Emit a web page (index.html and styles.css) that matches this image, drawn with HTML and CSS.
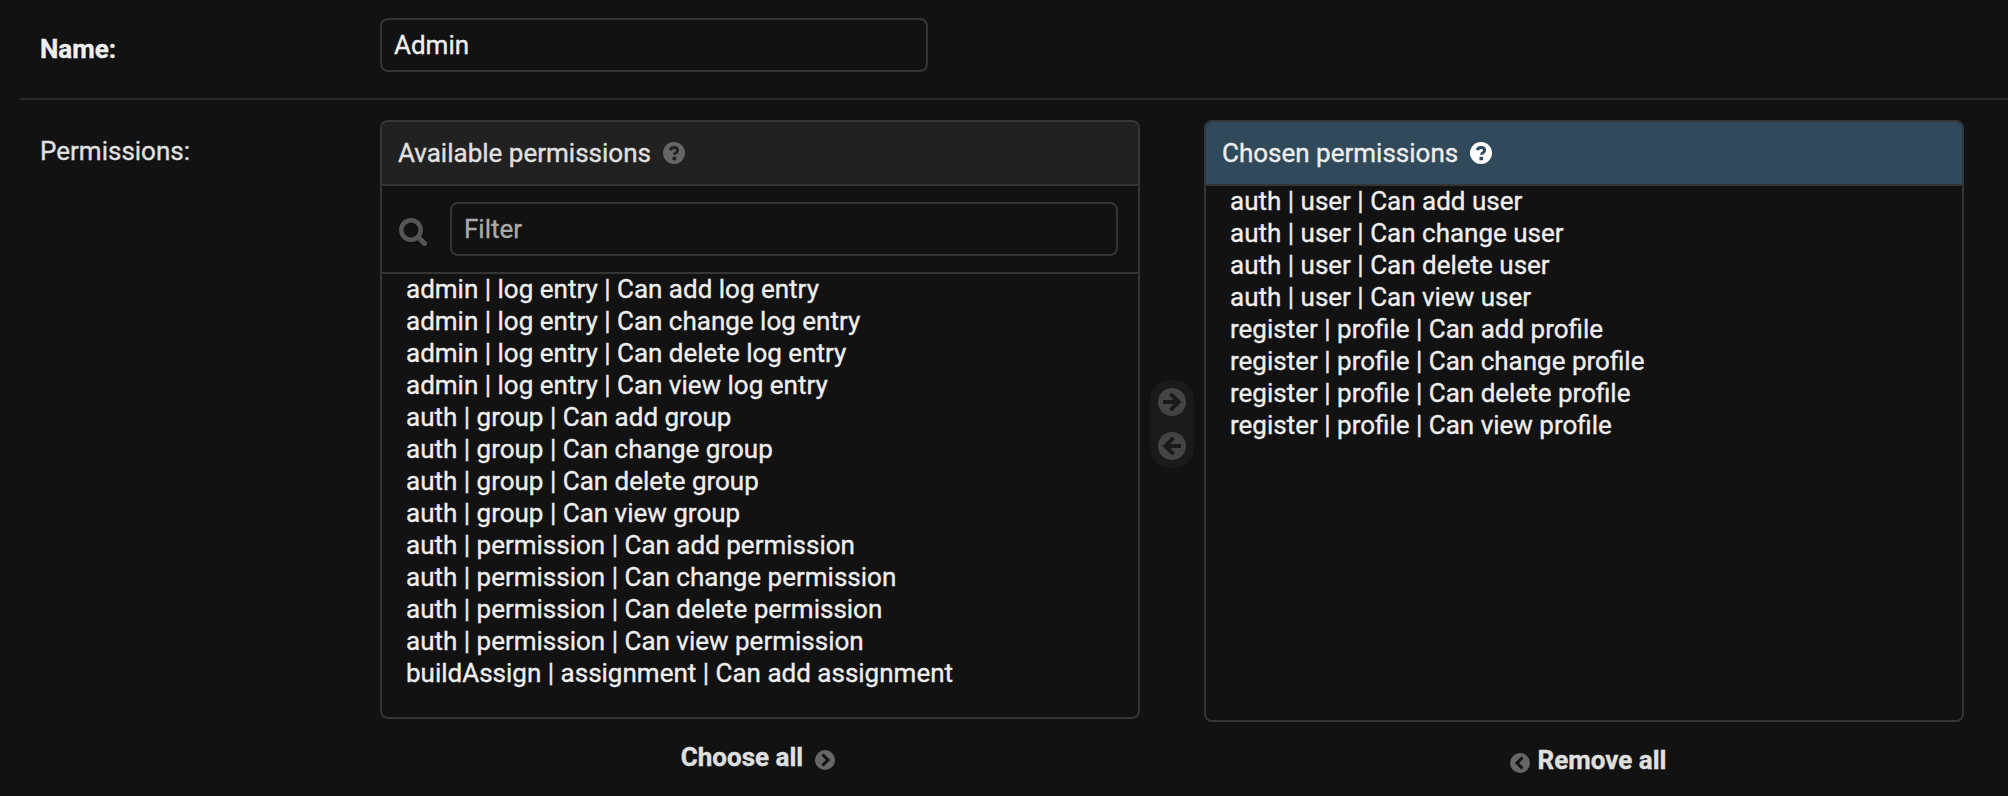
FILE: index.html
```
<!DOCTYPE html>
<html lang="en">
<head>
<meta charset="utf-8">
<title>Group permissions</title>
<link rel="stylesheet" href="styles.css">
</head>
<body>
<form class="module">
  <div class="row row-name">
    <label class="label required" for="name">Name:</label>
    <input class="field name-field" id="name" type="text" value="Admin">
  </div>
  <div class="row row-permissions">
    <div class="label">Permissions:</div>
    <div class="selector">
      <div class="column">
        <section class="panel available">
          <h2 class="panel-title">Available permissions
            <svg class="help" viewBox="0 0 22 22"><circle cx="11" cy="11" r="11" fill="#666"/><path d="M7.2 8.100C7.900 6.300 9.300 5.600 11 5.600c2.100 0 3.600 1.200 3.600 2.900 0 2.300-3.100 2.100-3.100 4.300" fill="none" stroke="#212121" stroke-width="3"/><path d="M9.500 14.800h3.600v3.400H9.500z" fill="#212121"/></svg>
          </h2>
          <div class="filter">
            <svg class="search" viewBox="0 0 28 28"><circle cx="12" cy="12" r="9.700" fill="none" stroke="#555" stroke-width="4.500"/><path d="M19 19l6.500 6.500" stroke="#555" stroke-width="5" stroke-linecap="round"/></svg>
            <input class="field filter-field" type="text" placeholder="Filter">
          </div>
          <ul class="options">
            <li>admin | log entry | Can add log entry</li>
            <li>admin | log entry | Can change log entry</li>
            <li>admin | log entry | Can delete log entry</li>
            <li>admin | log entry | Can view log entry</li>
            <li>auth | group | Can add group</li>
            <li>auth | group | Can change group</li>
            <li>auth | group | Can delete group</li>
            <li>auth | group | Can view group</li>
            <li>auth | permission | Can add permission</li>
            <li>auth | permission | Can change permission</li>
            <li>auth | permission | Can delete permission</li>
            <li>auth | permission | Can view permission</li>
            <li>buildAssign | assignment | Can add assignment</li>
          </ul>
        </section>
        <a class="all choose-all">Choose all
          <svg class="chevron" viewBox="0 0 20 20"><circle cx="10" cy="10" r="10" fill="#666"/><path d="M7.500 4.500l5.500 5.500-5.500 5.500" fill="none" stroke="#121212" stroke-width="3"/></svg>
        </a>
      </div>
      <div class="chooser">
        <svg class="arrow" viewBox="0 0 28 28"><circle cx="14" cy="14" r="14" fill="#444"/><path d="M5 14h15M12.500 5.800l8.200 8.200-8.200 8.200" fill="none" stroke="#1a1a1a" stroke-width="4"/></svg>
        <svg class="arrow" viewBox="0 0 28 28"><circle cx="14" cy="14" r="14" fill="#444"/><path d="M23 14H8M15.500 5.800L7.300 14l8.200 8.200" fill="none" stroke="#1a1a1a" stroke-width="4"/></svg>
      </div>
      <div class="column">
        <section class="panel chosen">
          <h2 class="panel-title">Chosen permissions
            <svg class="help" viewBox="0 0 22 22"><circle cx="11" cy="11" r="11" fill="#fff"/><path d="M7.200 8.100C7.900 6.300 9.300 5.600 11 5.600c2.100 0 3.600 1.200 3.600 2.900 0 2.300-3.100 2.100-3.100 4.300" fill="none" stroke="#304a5b" stroke-width="3"/><path d="M9.500 14.800h3.600v3.400H9.500z" fill="#304a5b"/></svg>
          </h2>
          <ul class="options">
            <li>auth | user | Can add user</li>
            <li>auth | user | Can change user</li>
            <li>auth | user | Can delete user</li>
            <li>auth | user | Can view user</li>
            <li>register | profile | Can add profile</li>
            <li>register | profile | Can change profile</li>
            <li>register | profile | Can delete profile</li>
            <li>register | profile | Can view profile</li>
          </ul>
        </section>
        <a class="all remove-all">
          <svg class="chevron" viewBox="0 0 20 20"><circle cx="10" cy="10" r="10" fill="#666"/><path d="M12.500 4.500L7 10l5.500 5.500" fill="none" stroke="#121212" stroke-width="3"/></svg>
          Remove all</a>
      </div>
    </div>
  </div>
</form>
</body>
</html>
```
FILE: styles.css
```
* { box-sizing: border-box; }
body {
  margin: 0;
  height: 796px;
  overflow: hidden;
  background: #121212;
  color: #e0e0e0;
  font: 26px/32px Roboto, sans-serif;
  -webkit-text-stroke: 0.35px currentColor;
}
.module { margin: 0 0 0 20px; }
.row { display: flex; padding-left: 20px; }
.row-name { height: 100px; padding-top: 18px; border-bottom: 2px solid #282828; }
.row-permissions { padding-top: 20px; }
.label { width: 340px; flex: none; padding-top: 15px; }
.required { font-weight: 700; color: #eee; }
.field {
  display: block;
  height: 54px;
  padding: 0 12px;
  border: 2px solid #353535;
  border-radius: 8px;
  background: #121212;
  color: #eee;
  font: inherit;
}
.name-field { width: 548px; }
.field::placeholder { color: #aaa; opacity: 1; }
.selector { display: flex; }
.column { width: 760px; }
.panel { border: 2px solid #353535; border-radius: 8px; overflow: hidden; }
.available { height: 599px; }
.chosen { height: 602px; }
.panel-title {
  display: flex;
  align-items: center;
  gap: 12px;
  height: 64px;
  margin: 0;
  padding: 0 16px;
  border-bottom: 2px solid #353535;
  background: #212121;
  font-size: 26px;
  font-weight: 400;
}
.chosen .panel-title { background: #304a5b; color: #eee; }
.help { width: 22px; height: 22px; }
.filter { display: flex; height: 88px; padding: 16px 20px 0 17px; border-bottom: 2px solid #353535; }
.search { width: 28px; height: 28px; margin: 16px 23px 0 0; flex: none; }
.filter-field { flex: 1; min-width: 0; }
.options { margin: -1px 0 0; padding: 0 24px; list-style: none; color: #eee; }
.chooser {
  display: flex;
  flex-direction: column;
  align-items: center;
  gap: 16px;
  width: 44px;
  height: 88px;
  margin: 260px 10px 0;
  padding-top: 8px;
  border-radius: 20px;
  background: #1a1a1a;
}
.arrow { width: 28px; height: 28px; }
.all { display: flex; justify-content: center; align-items: center; margin-top: 22px; font-weight: 700; }
.chevron { width: 20px; height: 20px; margin-top: 6px; }
.choose-all { gap: 12px; padding-right: 4px; }
.remove-all { gap: 8px; padding-left: 8px; }
```
